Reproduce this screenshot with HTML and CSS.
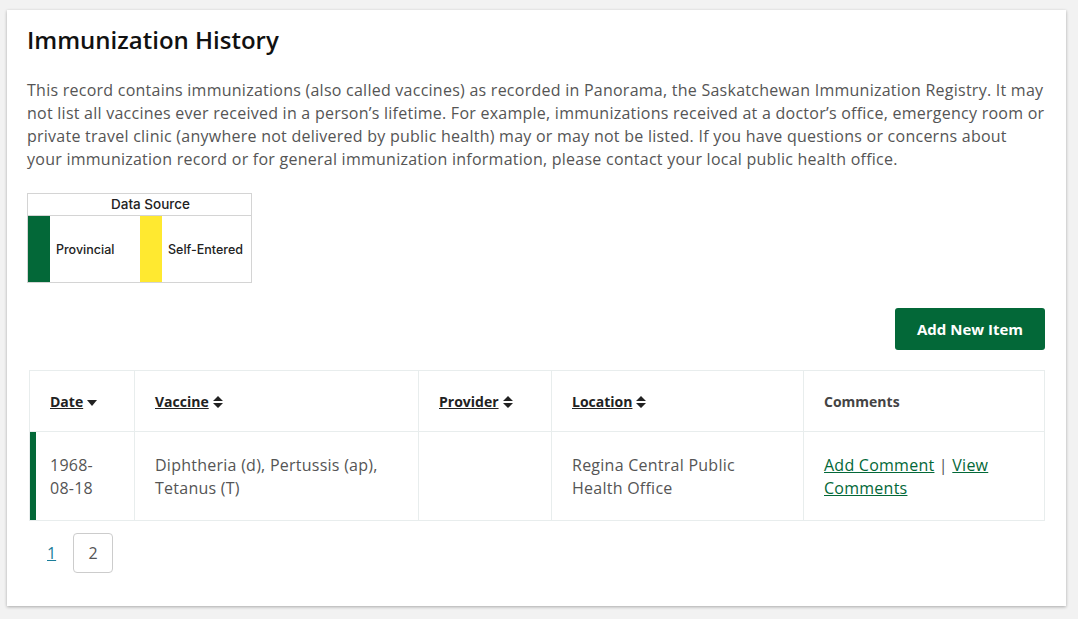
FILE: index.html
```html
<!DOCTYPE html>
<html lang="en">
<head>
<meta charset="utf-8">
<title>Immunization History</title>
<link rel="stylesheet" href="styles.css">
</head>
<body>
<main class="card">
  <h1 class="title">Immunization History</h1>
  <p class="intro">This record contains immunizations (also called vaccines) as recorded in Panorama, the Saskatchewan Immunization Registry. It may not list all vaccines ever received in a person’s lifetime. For example, immunizations received at a doctor’s office, emergency room or private travel clinic (anywhere not delivered by public health) may or may not be listed. If you have questions or concerns about your immunization record or for general immunization information, please contact your local public health office.</p>

  <div class="legend">
    <div class="legend-head">Data Source</div>
    <div class="legend-body">
      <span class="swatch swatch-green"></span>
      <span class="legend-label">Provincial</span>
      <span class="swatch swatch-yellow"></span>
      <span class="legend-label">Self-Entered</span>
    </div>
  </div>

  <div class="actions">
    <button class="btn-add" type="button">Add New Item</button>
  </div>

  <table class="grid">
    <colgroup>
      <col class="c-date"><col class="c-vaccine"><col class="c-provider"><col class="c-location"><col class="c-comments">
    </colgroup>
    <thead>
      <tr>
        <th><a class="sort" href="#">Date</a><svg class="ico" width="10" height="16" viewBox="0 0 10 16"><path d="M0 6h10l-5 6z" fill="#222"/></svg></th>
        <th><a class="sort" href="#">Vaccine</a><svg class="ico" width="10" height="16" viewBox="0 0 10 16"><path d="M0 7h10L5 2zM0 9h10l-5 5z" fill="#222"/></svg></th>
        <th><a class="sort" href="#">Provider</a><svg class="ico" width="10" height="16" viewBox="0 0 10 16"><path d="M0 7h10L5 2zM0 9h10l-5 5z" fill="#222"/></svg></th>
        <th><a class="sort" href="#">Location</a><svg class="ico" width="10" height="16" viewBox="0 0 10 16"><path d="M0 7h10L5 2zM0 9h10l-5 5z" fill="#222"/></svg></th>
        <th class="plain">Comments</th>
      </tr>
    </thead>
    <tbody>
      <tr class="row-provincial">
        <td class="date">1968-<br>08-18</td>
        <td>Diphtheria (d), Pertussis (ap), Tetanus (T)</td>
        <td></td>
        <td>Regina Central Public Health Office</td>
        <td><a class="link" href="#">Add Comment</a> | <a class="link" href="#">View Comments</a></td>
      </tr>
    </tbody>
  </table>

  <nav class="pager">
    <a class="page-link" href="#">1</a>
    <span class="page-current">2</span>
  </nav>
</main>
</body>
</html>
```

FILE: styles.css
```css
* { box-sizing: border-box; }
html, body { margin: 0; padding: 0; }
body {
  background: #f2f2f2;
  font-family: "Open Sans", "Noto Sans", sans-serif;
  color: #555;
  padding: 10px 12px 14px 7px;
}
.card {
  background: #fff;
  box-shadow: 0 1px 3px rgba(0,0,0,0.3);
  padding: 13px 21px 33px 20px;
  min-height: 595px;
}
.title {
  margin: 0;
  font-size: 24px;
  font-weight: 600;
  color: #111;
  line-height: 34px;
}
.intro {
  margin: 22px 0 0;
  font-size: 16px;
  letter-spacing: 0.25px;
  line-height: 23px;
  color: #555;
}
.legend {
  margin-top: 22px;
  width: 225px;
  border: 1px solid #d4d4d4;
  font-family: Inter, "Noto Sans", sans-serif;
  color: #222;
}
.legend-head {
  height: 22px;
  border-bottom: 1px solid #d4d4d4;
  text-align: center;
  font-size: 13.5px;
  font-weight: 500;
  line-height: 21px;
  padding-left: 22px;
}
.legend-body {
  display: flex;
  height: 66px;
  align-items: center;
}
.swatch { align-self: stretch; width: 22px; flex: none; }
.swatch-green { background: #036838; }
.swatch-yellow { background: #ffe930; }
.legend-label {
  font-size: 12.5px;
  font-weight: 500;
  padding-left: 6px;
}
.legend-label:nth-of-type(2) { width: 90px; }
.actions {
  display: flex;
  justify-content: flex-end;
  margin-top: 25px;
}
.btn-add {
  background: #036838;
  color: #fff;
  border: 0;
  border-radius: 3px;
  font-family: "Open Sans", sans-serif;
  font-weight: 700;
  font-size: 15px;
  width: 150px;
  height: 42px;
  cursor: pointer;
}
.grid {
  margin: 20px 0 0 2px;
  width: 1015px;
  border-collapse: collapse;
  table-layout: fixed;
}
.c-date { width: 105px; }
.c-vaccine { width: 284px; }
.c-provider { width: 133px; }
.c-location { width: 252px; }
.c-comments { width: 241px; }
.grid th, .grid td {
  border: 1px solid #e8eded;
  text-align: left;
  vertical-align: middle;
}
.grid th {
  height: 61px;
  padding: 0 20px;
  font-size: 14px;
  font-weight: 700;
  color: #222;
  white-space: nowrap;
}
.grid th.plain { color: #444; }
.sort { color: #222; text-decoration: underline; }
.ico { vertical-align: -3px; margin-left: 4px; }
.grid td {
  height: 89px;
  padding: 1px 20px 0;
  font-size: 16px;
  letter-spacing: 0.25px;
  line-height: 23px;
  color: #555;
}
.row-provincial td:first-child { box-shadow: inset 6px 0 0 #036838; }
.link { color: #036838; text-decoration: underline; }
.pager {
  display: flex;
  align-items: center;
  margin-top: 12px;
  padding-left: 20px;
  font-size: 16px;
}
.page-link {
  color: #1a7d9a;
  text-decoration: underline;
  width: 26px;
  text-align: left;
}
.page-current {
  width: 40px;
  height: 40px;
  border: 1px solid #ccc;
  border-radius: 4px;
  display: flex;
  align-items: center;
  justify-content: center;
  color: #555;
}
```
